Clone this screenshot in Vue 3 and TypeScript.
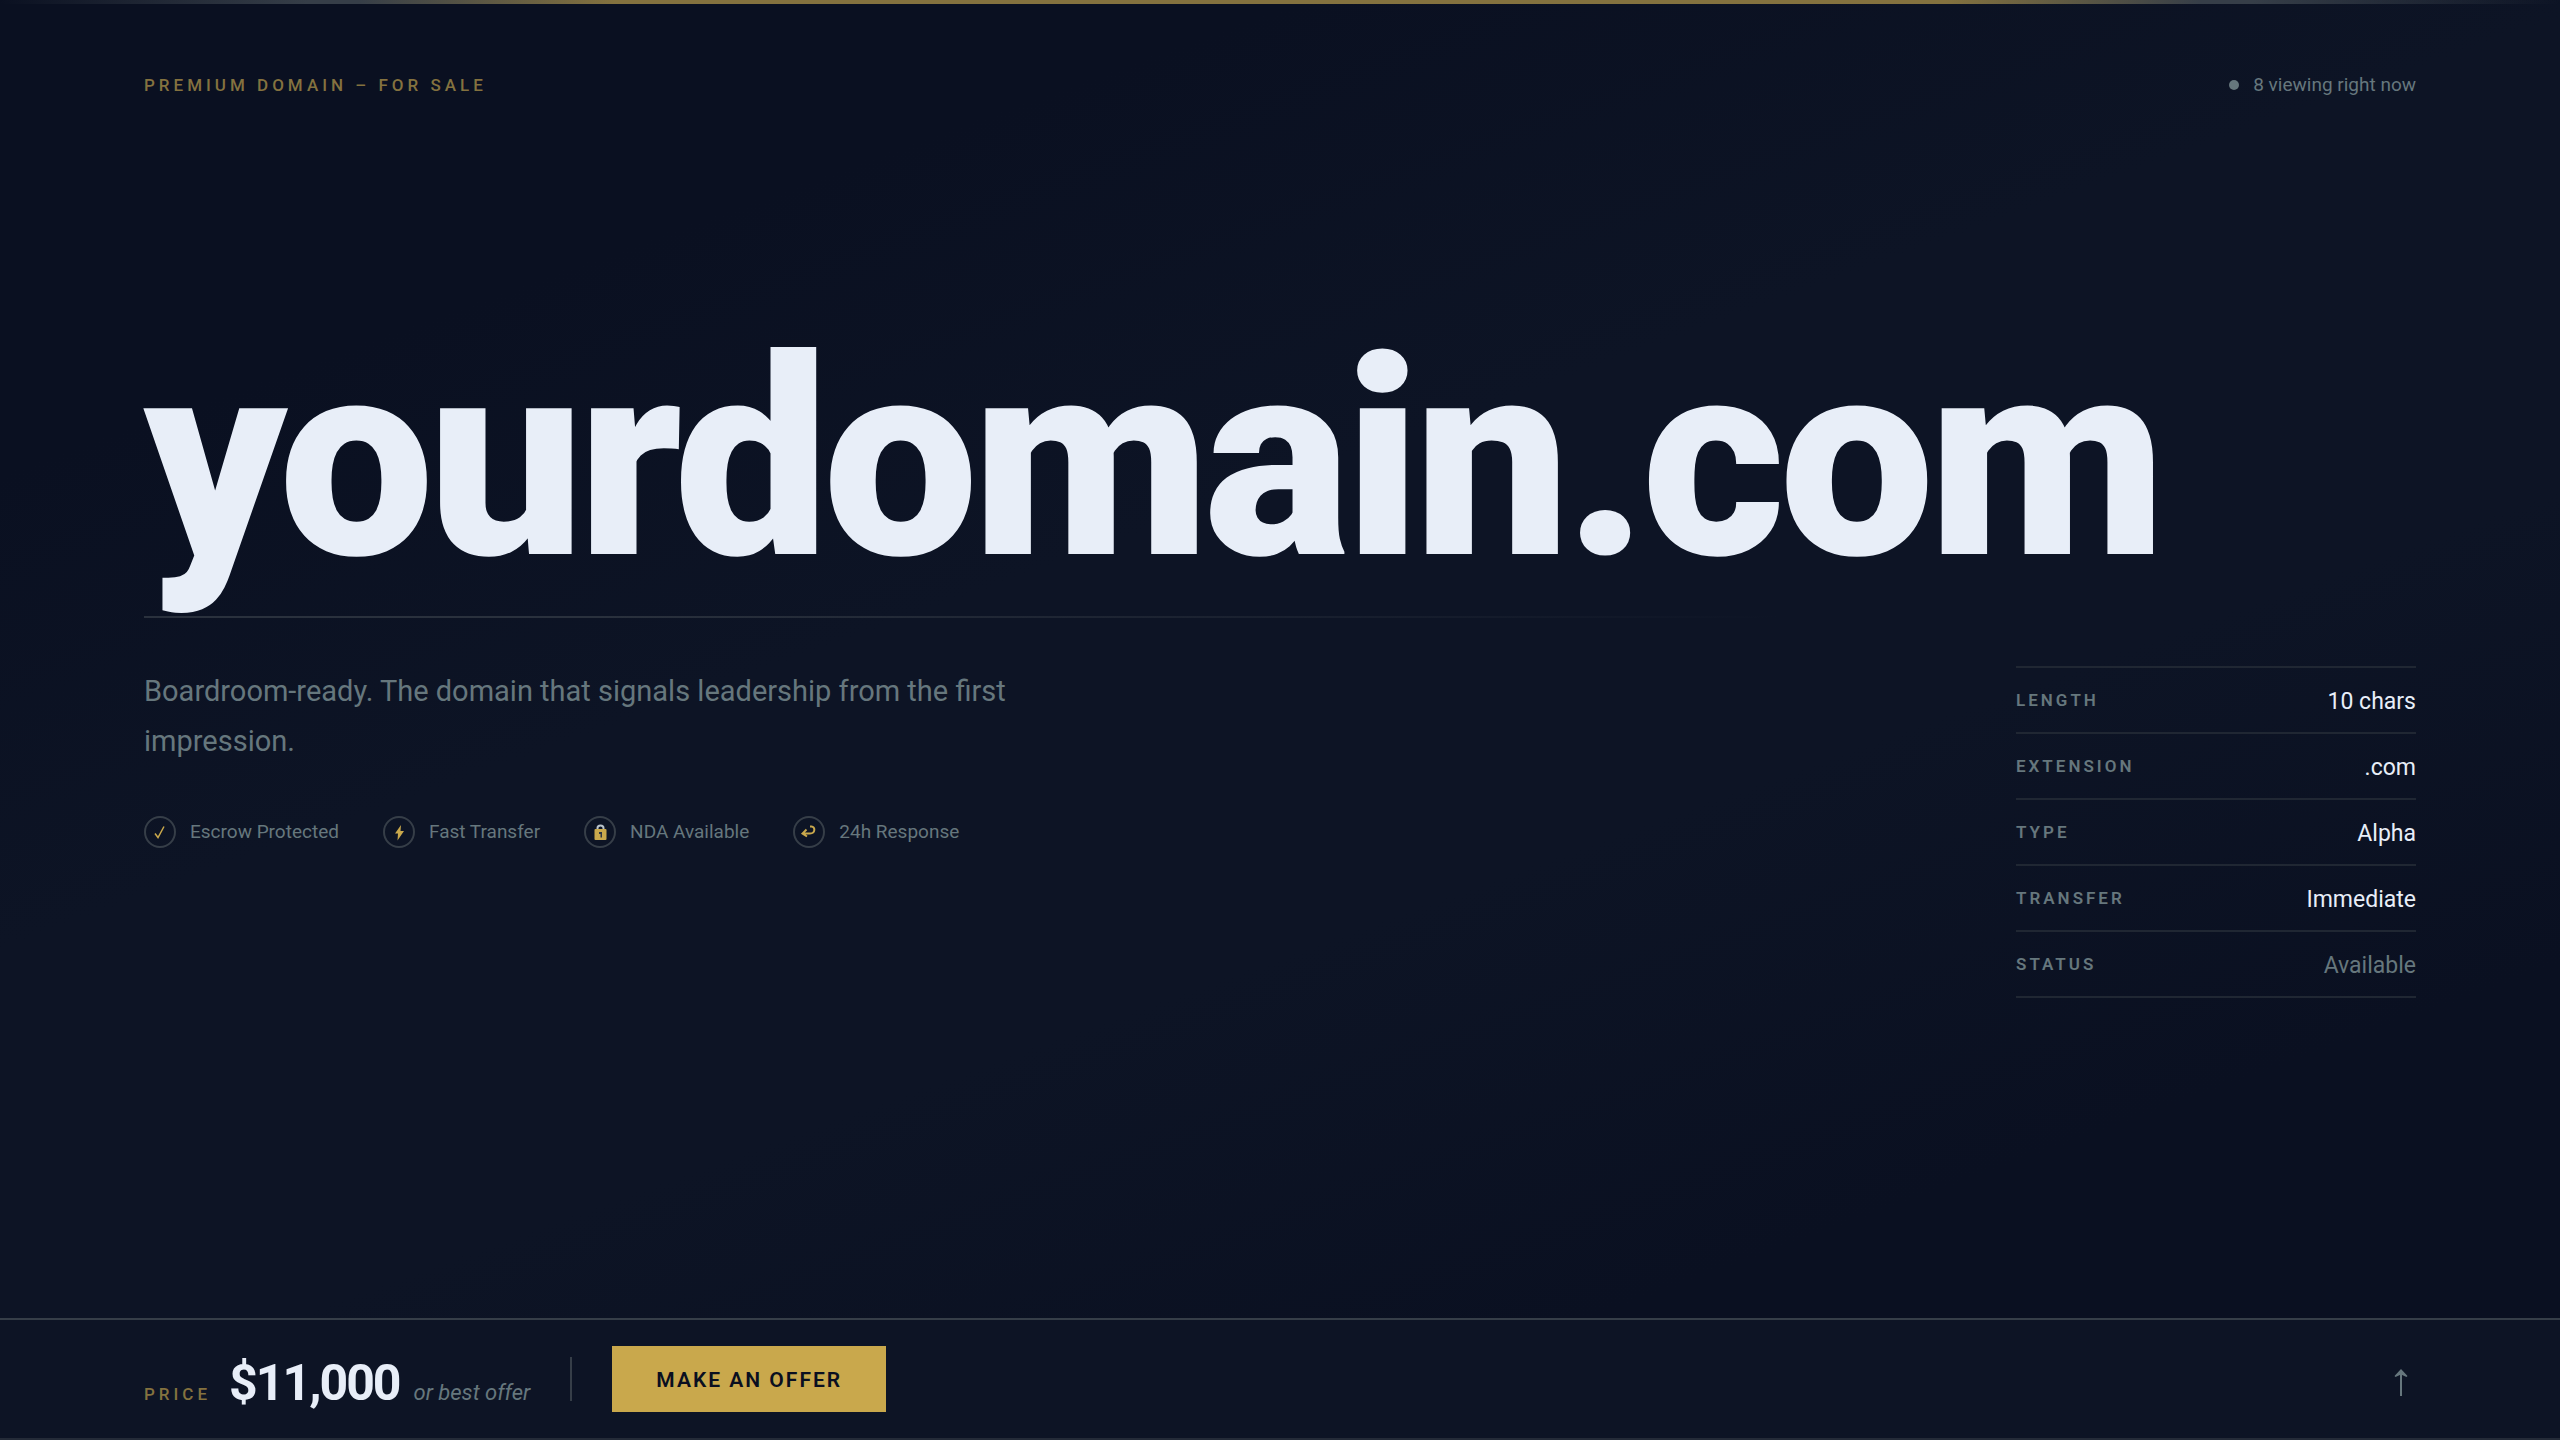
<script setup lang="ts">
interface Fact {
  label: string
  value: string
  muted?: boolean
}

const facts: Fact[] = [
  { label: 'LENGTH', value: '10 chars' },
  { label: 'EXTENSION', value: '.com' },
  { label: 'TYPE', value: 'Alpha' },
  { label: 'TRANSFER', value: 'Immediate' },
  { label: 'STATUS', value: 'Available', muted: true },
]
</script>

<template>
  <div class="page">
    <div class="accent"></div>

    <header class="top">
      <span class="eyebrow">PREMIUM DOMAIN – FOR SALE</span>
      <span class="viewers"><i class="dot"></i>8 viewing right now</span>
    </header>

    <main class="hero">
      <h1 class="domain">yourdomain.com</h1>
      <div class="rule"></div>
      <div class="details">
        <section class="pitch">
          <p class="tagline">Boardroom-ready. The domain that signals leadership from the first impression.</p>
          <ul class="badges">
            <li>
              <span class="ring">
                <svg viewBox="0 0 32 32"><path d="M11 17.5l3 4 6-11" fill="none" stroke="#c9a84c" stroke-width="1.5" /></svg>
              </span>
              Escrow Protected
            </li>
            <li>
              <span class="ring">
                <svg viewBox="0 0 32 32"><path d="M18 9L12 17.500h3L14.500 24.500 21 15h-3.500z" fill="#c9a84c" /></svg>
              </span>
              Fast Transfer
            </li>
            <li>
              <span class="ring">
                <svg viewBox="0 0 32 32">
                  <path d="M13.500 13v-1a3 2.500 0 0 1 6 0v1" fill="none" stroke="#b9c3cb" stroke-width="2" />
                  <rect x="10.500" y="13" width="12" height="11" rx="1" fill="#c9a84c" />
                  <path d="M15 16h3v5.500h-1.500V18H15z" fill="#2d3544" />
                </svg>
              </span>
              NDA Available
            </li>
            <li>
              <span class="ring">
                <svg viewBox="0 0 32 32"><path d="M17 10.500h1.500c4 0 4 7-1.500 7h-7M13.500 13.500l-4 4 4.500 3" fill="none" stroke="#c9a84c" stroke-width="2" /></svg>
              </span>
              24h Response
            </li>
          </ul>
        </section>

        <table class="facts">
          <tbody>
            <tr v-for="fact in facts" :key="fact.label">
              <th scope="row">{{ fact.label }}</th>
              <td :class="{ muted: fact.muted }">{{ fact.value }}</td>
            </tr>
          </tbody>
        </table>
      </div>
    </main>

    <footer class="bar">
      <div class="price">
        <span class="price-label">PRICE</span>
        <strong class="amount">$11,000</strong>
        <em class="note">or best offer</em>
      </div>
      <span class="divider"></span>
      <button class="offer" type="button">MAKE AN OFFER</button>
      <button class="to-top" type="button" aria-label="Back to top">
        <svg viewBox="0 0 14 28"><path d="M7 27V2" fill="none" stroke="#66777d" stroke-width="2" /><path d="M7 0l6.500 7-1 1L7 5.500 1.500 8l-1-1z" fill="#66777d" /></svg>
      </button>
    </footer>
  </div>
</template>

<style>
body {
  background: #0a1021;
}
</style>

<style scoped>
.page {
  display: flex;
  flex-direction: column;
  min-height: 100vh;
  box-sizing: border-box;
  font-family: Roboto, "Liberation Sans", sans-serif;
  color: #e8eef8;
  background: linear-gradient(160deg, #0a1021 0%, #0a1021 20%, #0d1425 40%, #0d1425 60%, #0a1021 80%, #0a1021 100%);
}
.accent {
  height: 4px;
  flex: none;
  background: linear-gradient(90deg, transparent 0%, #363e48 12%, #363e48 14%, #84723f 24%, #84723f 76%, #363e48 86%, #363e48 88%, transparent 100%);
}
.top {
  display: flex;
  justify-content: space-between;
  align-items: center;
  padding: 67px 144px 0;
  line-height: 28px;
}
.eyebrow,
.price-label {
  font-size: 17px;
  font-weight: 500;
  letter-spacing: 4px;
  color: #84723f;
}
.viewers {
  display: flex;
  align-items: center;
  gap: 14px;
  font-size: 19px;
  color: #66777d;
}
.dot {
  width: 10px;
  height: 10px;
  border-radius: 50%;
  background: #66777d;
}
.hero {
  flex: 1;
  display: flex;
  flex-direction: column;
  justify-content: center;
  padding: 0 144px 100px;
}
.domain {
  margin: 0 0 16px;
  font-size: 276px;
  line-height: 280px;
  font-weight: 900;
  letter-spacing: -6px;
  white-space: nowrap;
}
.rule {
  height: 2px;
  background: linear-gradient(90deg, #2a313d 0%, #2a313d 20%, transparent 72%);
}
.details {
  display: flex;
  justify-content: space-between;
  align-items: flex-start;
  padding-top: 48px;
}
.pitch {
  width: 900px;
}
.tagline {
  margin: 0;
  font-size: 29px;
  line-height: 50px;
  font-weight: 400;
  color: #66777d;
}
.badges {
  display: flex;
  gap: 44px;
  margin: 50px 0 0;
  padding: 0;
  list-style: none;
  font-size: 19px;
  line-height: 32px;
  color: #66777d;
  white-space: nowrap;
}
.badges li {
  display: flex;
  align-items: center;
  gap: 14px;
}
.ring {
  width: 32px;
  height: 32px;
  box-sizing: border-box;
  border: 2px solid #363e48;
  border-radius: 50%;
}
.ring svg {
  display: block;
  width: 32px;
  height: 32px;
  margin: -2px;
}
.facts {
  width: 400px;
  border-collapse: collapse;
}
.facts tr {
  height: 66px;
  border-top: 2px solid #202733;
  border-bottom: 2px solid #202733;
}
.facts th {
  padding: 0;
  text-align: left;
  font-size: 17px;
  font-weight: 600;
  letter-spacing: 3px;
  color: #66777d;
}
.facts td {
  padding: 4px 0 0;
  text-align: right;
  font-size: 23px;
  font-weight: 400;
}
.facts td.muted {
  color: #66777d;
}
.bar {
  display: flex;
  align-items: center;
  height: 122px;
  box-sizing: border-box;
  padding: 0 144px;
  border-top: 2px solid #363e48;
  border-bottom: 2px solid #242b38;
  background: #0d1425;
}
.price {
  display: flex;
  align-items: baseline;
  padding-top: 8px;
}
.amount {
  margin-left: 18px;
  font-size: 50px;
  line-height: 60px;
  font-weight: 700;
  letter-spacing: -2px;
}
.note {
  margin-left: 14px;
  font-size: 22px;
  font-weight: 400;
  color: #66777d;
}
.divider {
  width: 2px;
  height: 44px;
  margin: 0 40px;
  background: #363e48;
}
.offer {
  height: 66px;
  padding: 2px 44px 0;
  border: 0;
  background: #c9a84c;
  color: #0a0f20;
  font: 600 21px/28px Roboto, "Liberation Sans", sans-serif;
  letter-spacing: 2px;
}
.to-top {
  display: flex;
  margin-left: auto;
  padding: 16px 8px 8px;
  border: 0;
  background: none;
}
.to-top svg {
  width: 14px;
  height: 28px;
}
</style>
